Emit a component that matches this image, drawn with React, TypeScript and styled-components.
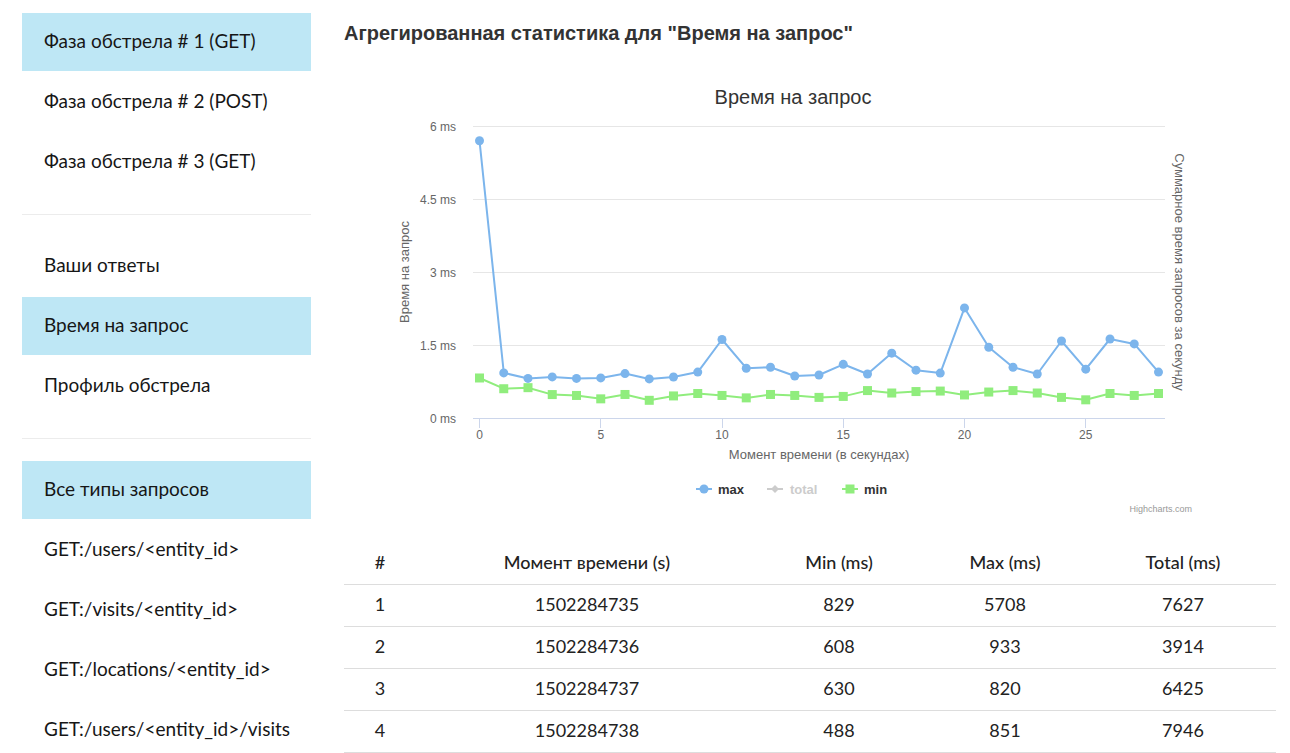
import React from "react";
import styled, { createGlobalStyle } from "styled-components";

const GlobalStyle = createGlobalStyle`
  html, body { margin: 0; padding: 0; background: #ffffff; }
  body { font-family: Lato, "Open Sans", sans-serif; color: #1a1a1a; }
`;

const Page = styled.div`
  display: flex;
  align-items: flex-start;
  width: 1290px;
`;

const Sidebar = styled.nav`
  flex-shrink: 0;
  width: 289px;
  margin-left: 22px;
  padding-top: 12px;
`;

const NavGroup = styled.ul`
  list-style: none;
  margin: 0;
  padding: 1px 0;
  display: flex;
  flex-direction: column;
  gap: 2px;
`;

const NavItem = styled.li<{ $active?: boolean }>`
  box-sizing: border-box;
  height: 58px;
  padding: 0 0 4px 22px;
  display: flex;
  align-items: center;
  font-size: 19px;
  color: #161616;
  background: ${(p) => (p.$active ? "#bee7f5" : "transparent")};
`;

const Divider = styled.hr`
  border: 0;
  height: 1px;
  background: #ececec;
  margin: 22px 0 21px;
`;

const Main = styled.main`
  flex-shrink: 0;
  margin-left: 33px;
  width: 932px;
`;

const Heading = styled.h2`
  margin: 22px 0 0;
  font: bold 20px/22px "Liberation Sans", Arial, sans-serif;
  color: #333333;
`;

const ChartSvg = styled.svg`
  display: block;
  margin-top: 16px;
  font-family: "Liberation Sans", Arial, sans-serif;
`;

const ChartTitle = styled.text`
  font-size: 20px;
  fill: #333333;
`;

const AxisLabel = styled.text`
  font-size: 12px;
  fill: #666666;
`;

const AxisTitle = styled.text`
  font-size: 13px;
  fill: #666666;
`;

const LegendText = styled.text<{ $muted?: boolean }>`
  font-size: 13px;
  font-weight: bold;
  fill: ${(p) => (p.$muted ? "#cccccc" : "#333333")};
`;

const Credits = styled.text`
  font-size: 9px;
  fill: #999999;
`;

const GridLine = styled.line`
  stroke: #e6e6e6;
  stroke-width: 1;
`;

const AxisLine = styled.line`
  stroke: #ccd6eb;
  stroke-width: 1;
`;

const SeriesPath = styled.path<{ $color: string }>`
  fill: none;
  stroke: ${(p) => p.$color};
  stroke-width: 2;
  stroke-linejoin: round;
  stroke-linecap: round;
`;

const StatsTable = styled.table`
  margin-top: 11px;
  width: 932px;
  table-layout: fixed;
  border-collapse: separate;
  border-spacing: 0;
  font-size: 18px;
  color: #222222;
`;

const HeadCell = styled.th`
  box-sizing: border-box;
  height: 44px;
  font-weight: 500;
  text-align: center;
  vertical-align: middle;
  padding: 0 0 2px;
  border-bottom: 1px solid #dddddd;
`;

const Cell = styled.td`
  box-sizing: border-box;
  height: 42px;
  text-align: center;
  vertical-align: middle;
  padding: 0 0 3px;
  border-bottom: 1px solid #dddddd;
`;

const X0 = 479.5;
const XS = 24.25;
const Y0 = 418.3;
const YS = 48.63;
const px = (i: number) => X0 + i * XS;
const py = (v: number) => Y0 - v * YS;

const maxData = [
  5.708, 0.933, 0.82, 0.851, 0.82, 0.83, 0.92, 0.81, 0.85, 0.95, 1.62, 1.03, 1.05, 0.87, 0.89, 1.11, 0.91,
  1.34, 0.99, 0.93, 2.27, 1.46, 1.05, 0.91, 1.59, 1.01, 1.63, 1.53, 0.95,
];
const minData = [
  0.829, 0.608, 0.63, 0.488, 0.47, 0.4, 0.49, 0.37, 0.46, 0.51, 0.47, 0.42, 0.49, 0.47, 0.43, 0.45, 0.57,
  0.52, 0.55, 0.56, 0.48, 0.54, 0.57, 0.52, 0.43, 0.38, 0.51, 0.47, 0.51,
];

const toPath = (data: number[]) =>
  data.map((v, i) => `${i === 0 ? "M" : "L"}${px(i).toFixed(1)},${py(v).toFixed(1)}`).join(" ");

const yTicks = [
  { v: 0, label: "0 ms" },
  { v: 1.5, label: "1.5 ms" },
  { v: 3, label: "3 ms" },
  { v: 4.5, label: "4.5 ms" },
  { v: 6, label: "6 ms" },
];
const xTicks = [0, 5, 10, 15, 20, 25];

const MAX_COLOR = "#7cb5ec";
const MIN_COLOR = "#90ed7d";

function Chart() {
  return (
    <ChartSvg width={932} height={470} viewBox="344 60 932 470">
      <ChartTitle x={793} y={104} textAnchor="middle">
        Время на запрос
      </ChartTitle>

      {yTicks.map((t) => {
        const y = Math.floor(py(t.v)) + 0.5;
        return (
          <g key={t.v}>
            {t.v === 0 ? (
              <AxisLine x1={473} x2={1165} y1={y} y2={y} />
            ) : (
              <GridLine x1={473} x2={1165} y1={y} y2={y} />
            )}
            <AxisLabel x={456} y={y + 4} textAnchor="end">
              {t.label}
            </AxisLabel>
          </g>
        );
      })}

      {xTicks.map((t) => {
        const x = Math.floor(px(t)) + 0.5;
        return (
          <g key={t}>
            <AxisLine x1={x} x2={x} y1={418.5} y2={428} />
            <AxisLabel x={px(t)} y={439} textAnchor="middle">
              {t}
            </AxisLabel>
          </g>
        );
      })}

      <AxisTitle x={409} y={272} textAnchor="middle" transform="rotate(-90 409 272)">
        Время на запрос
      </AxisTitle>
      <AxisTitle x={1175} y={272} textAnchor="middle" transform="rotate(90 1175 272)">
        Суммарное время запросов за секунду
      </AxisTitle>
      <AxisTitle x={819} y={459} textAnchor="middle">
        Момент времени (в секундах)
      </AxisTitle>

      <SeriesPath $color={MIN_COLOR} d={toPath(minData)} />
      {minData.map((v, i) => (
        <rect key={i} x={px(i) - 4.5} y={py(v) - 4.5} width={9} height={9} fill={MIN_COLOR} />
      ))}
      <SeriesPath $color={MAX_COLOR} d={toPath(maxData)} />
      {maxData.map((v, i) => (
        <circle key={i} cx={px(i)} cy={py(v)} r={4.5} fill={MAX_COLOR} />
      ))}

      <g>
        <line x1={696} x2={712} y1={489} y2={489} stroke={MAX_COLOR} strokeWidth={2} />
        <circle cx={704} cy={489} r={4.5} fill={MAX_COLOR} />
        <LegendText x={718} y={494}>max</LegendText>

        <line x1={767} x2={783} y1={489} y2={489} stroke="#cccccc" strokeWidth={2} />
        <path d="M775,485 L779,489 L775,493 L771,489 Z" fill="#cccccc" />
        <LegendText $muted x={790} y={494}>
          total
        </LegendText>

        <line x1={842} x2={858} y1={489} y2={489} stroke={MIN_COLOR} strokeWidth={2} />
        <rect x={845.5} y={484.5} width={9} height={9} fill={MIN_COLOR} />
        <LegendText x={864} y={494}>min</LegendText>
      </g>

      <Credits x={1192} y={512} textAnchor="end">
        Highcharts.com
      </Credits>
    </ChartSvg>
  );
}

const rows = [
  ["1", "1502284735", "829", "5708", "7627"],
  ["2", "1502284736", "608", "933", "3914"],
  ["3", "1502284737", "630", "820", "6425"],
  ["4", "1502284738", "488", "851", "7946"],
];

export default function App() {
  return (
    <>
      <GlobalStyle />
      <Page>
        <Sidebar>
          <NavGroup>
            <NavItem $active>Фаза обстрела # 1 (GET)</NavItem>
            <NavItem>Фаза обстрела # 2 (POST)</NavItem>
            <NavItem>Фаза обстрела # 3 (GET)</NavItem>
          </NavGroup>
          <Divider />
          <NavGroup>
            <NavItem>Ваши ответы</NavItem>
            <NavItem $active>Время на запрос</NavItem>
            <NavItem>Профиль обстрела</NavItem>
          </NavGroup>
          <Divider />
          <NavGroup>
            <NavItem $active>Все типы запросов</NavItem>
            <NavItem>GET:/users/&lt;entity_id&gt;</NavItem>
            <NavItem>GET:/visits/&lt;entity_id&gt;</NavItem>
            <NavItem>GET:/locations/&lt;entity_id&gt;</NavItem>
            <NavItem>GET:/users/&lt;entity_id&gt;/visits</NavItem>
          </NavGroup>
        </Sidebar>
        <Main>
          <Heading>Агрегированная статистика для "Время на запрос"</Heading>
          <Chart />
          <StatsTable>
            <colgroup>
              <col style={{ width: 72 }} />
              <col style={{ width: 342 }} />
              <col style={{ width: 162 }} />
              <col style={{ width: 170 }} />
              <col style={{ width: 186 }} />
            </colgroup>
            <thead>
              <tr>
                <HeadCell>#</HeadCell>
                <HeadCell>Момент времени (s)</HeadCell>
                <HeadCell>Min (ms)</HeadCell>
                <HeadCell>Max (ms)</HeadCell>
                <HeadCell>Total (ms)</HeadCell>
              </tr>
            </thead>
            <tbody>
              {rows.map((r) => (
                <tr key={r[0]}>
                  {r.map((c, i) => (
                    <Cell key={i}>{c}</Cell>
                  ))}
                </tr>
              ))}
            </tbody>
          </StatsTable>
        </Main>
      </Page>
    </>
  );
}
